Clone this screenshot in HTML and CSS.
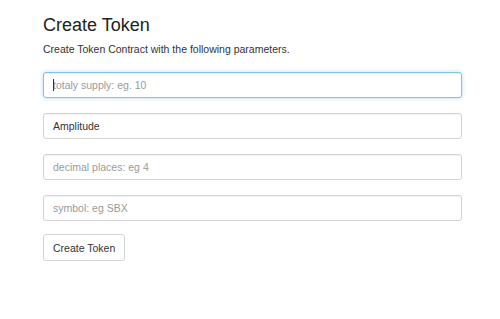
FILE: index.html
```html
<!DOCTYPE html>
<html>
<head>
<meta charset="utf-8">
<link rel="stylesheet" href="styles.css">
</head>
<body>
<div class="page">
  <h1 class="title">Create Token</h1>
  <p class="lead">Create Token Contract with the following parameters.</p>
  <form class="form">
    <div class="field">
      <input class="input focus" type="text" placeholder="totaly supply: eg. 10">
      <span class="caret"></span>
    </div>
    <div class="field">
      <input class="input" type="text" value="Amplitude">
    </div>
    <div class="field">
      <input class="input" type="text" placeholder="decimal places: eg 4">
    </div>
    <div class="field">
      <input class="input" type="text" placeholder="symbol: eg SBX">
    </div>
    <div class="actions">
      <button class="btn" type="button">Create Token</button>
    </div>
  </form>
</div>
</body>
</html>
```
FILE: styles.css
```css
html, body {
  margin: 0;
  padding: 0;
  background: #fff;
}
body {
  font-family: "Liberation Sans", Arial, sans-serif;
  font-size: 10.5px;
  line-height: 15px;
  color: #333;
}
.page {
  padding: 15px 38px 0 43px;
  width: 419px;
}
.title {
  margin: 0 0 7px 0;
  font-size: 18px;
  font-weight: 400;
  line-height: 20px;
  color: #222;
}
.lead {
  margin: 0 0 15px 0;
  font-size: 10.5px;
  line-height: 15px;
  color: #333;
}
.form {
  display: flex;
  flex-direction: column;
  gap: 15px;
}
.field {
  position: relative;
  display: flex;
}
.input {
  box-sizing: border-box;
  width: 420px;
  height: 26px;
  margin: 0;
  padding: 0 9px;
  font-family: "Liberation Sans", Arial, sans-serif;
  font-size: 10.5px;
  color: #333;
  background: #fff;
  border: 1px solid #d4d4d4;
  border-radius: 3px;
  box-shadow: inset 0 1px 1px rgba(0, 0, 0, 0.05);
  outline: none;
}
.input::placeholder {
  color: #9a9a9a;
  opacity: 1;
}
.input.focus {
  border-color: #8cbde2;
  box-shadow: inset 0 1px 1px rgba(0, 0, 0, 0.06), 0 0 4px rgba(102, 175, 233, 0.45);
}
.caret {
  position: absolute;
  left: 10px;
  top: 7px;
  width: 1px;
  height: 12px;
  background: #333;
}
.actions {
  display: flex;
  margin-top: -2px;
}
.btn {
  box-sizing: border-box;
  height: 27px;
  padding: 0 9px;
  font-family: "Liberation Sans", Arial, sans-serif;
  font-size: 10.5px;
  color: #333;
  background: #fff;
  border: 1px solid #d4d4d4;
  border-radius: 3px;
}
```
